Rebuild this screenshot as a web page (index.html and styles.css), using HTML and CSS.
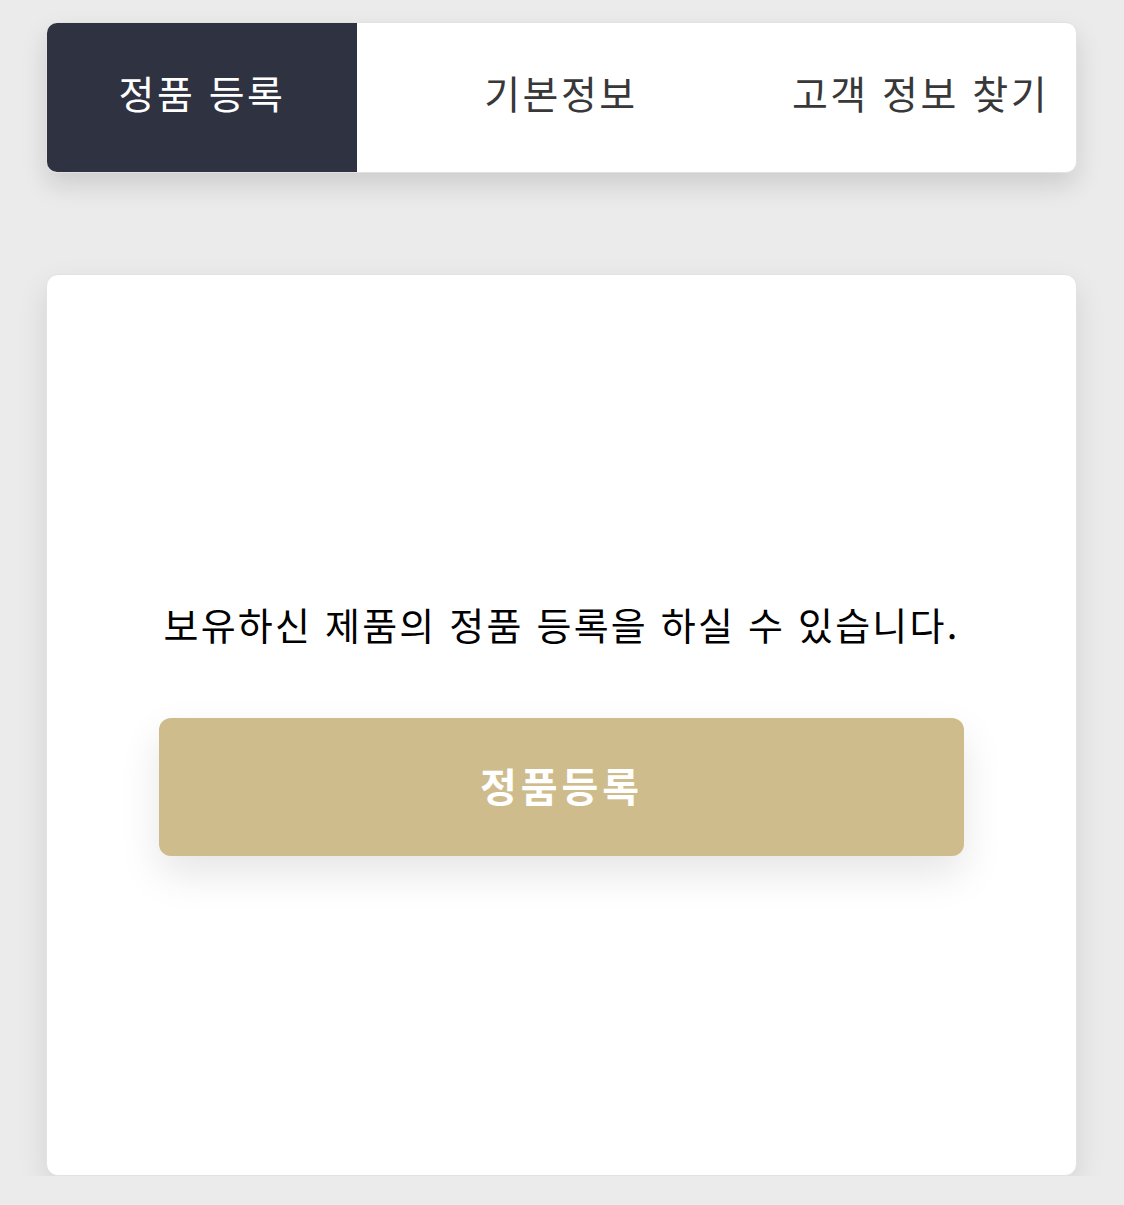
FILE: index.html
```html
<!DOCTYPE html>
<html lang="ko">
<head>
  <meta charset="UTF-8" />
  <meta name="viewport" content="width=device-width, initial-scale=1.0" />
  <link rel="stylesheet" href="styles.css">
</head>
<body>
  <div class="page">
    <nav class="tabs">
      <div class="tab active">정품 등록</div>
      <div class="tab">기본정보</div>
      <div class="tab">고객 정보 찾기</div>
    </nav>
    <section class="card">
      <p class="notice">보유하신 제품의 정품 등록을 하실 수 있습니다.</p>
      <button class="register">정품등록</button>
    </section>
  </div>
</body>
</html>
```

FILE: styles.css
```css
body {
  margin: 0;
  background-color: #ebebeb;
  font-family: "Noto Sans CJK KR", "Noto Sans", sans-serif;
  overflow: hidden;
}

.page {
  display: flex;
  flex-direction: column;
  gap: 101px;
  padding: 22px 47px 0 46px;
}

.tabs {
  display: grid;
  grid-template-columns: 310px 408px 1fr;
  height: 151px;
  box-sizing: border-box;
  background: #fff;
  border: 1px solid #e2e2e2;
  border-radius: 11px;
  overflow: hidden;
  box-shadow: 0 12px 26px rgba(0, 0, 0, 0.13);
}

.tab {
  display: flex;
  justify-content: center;
  align-items: center;
  font-size: 39px;
  letter-spacing: 2.5px;
  color: #383838;
  padding-bottom: 12px;

  &.active {
    background: #2f3241;
    color: #fff;
  }
}

.card {
  height: 902px;
  background: #fff;
  border: 1px solid #e2e2e2;
  border-radius: 12px;
  box-shadow: 0 12px 30px rgba(0, 0, 0, 0.1);
  display: flex;
  flex-direction: column;
  justify-content: center;
  align-items: center;
  padding-top: 1px;
  box-sizing: border-box;
}

.notice {
  margin: 0 0 67px;
  font-size: 38px;
  letter-spacing: 2.2px;
  color: #000;
}

.register {
  width: 805px;
  height: 138px;
  border: none;
  border-radius: 12px;
  background: #cebc8d;
  color: #fff;
  font-family: inherit;
  font-size: 40px;
  font-weight: bold;
  letter-spacing: 4px;
  padding-bottom: 4px;
  box-shadow: 0 18px 40px rgba(0, 0, 0, 0.1);
}
```
